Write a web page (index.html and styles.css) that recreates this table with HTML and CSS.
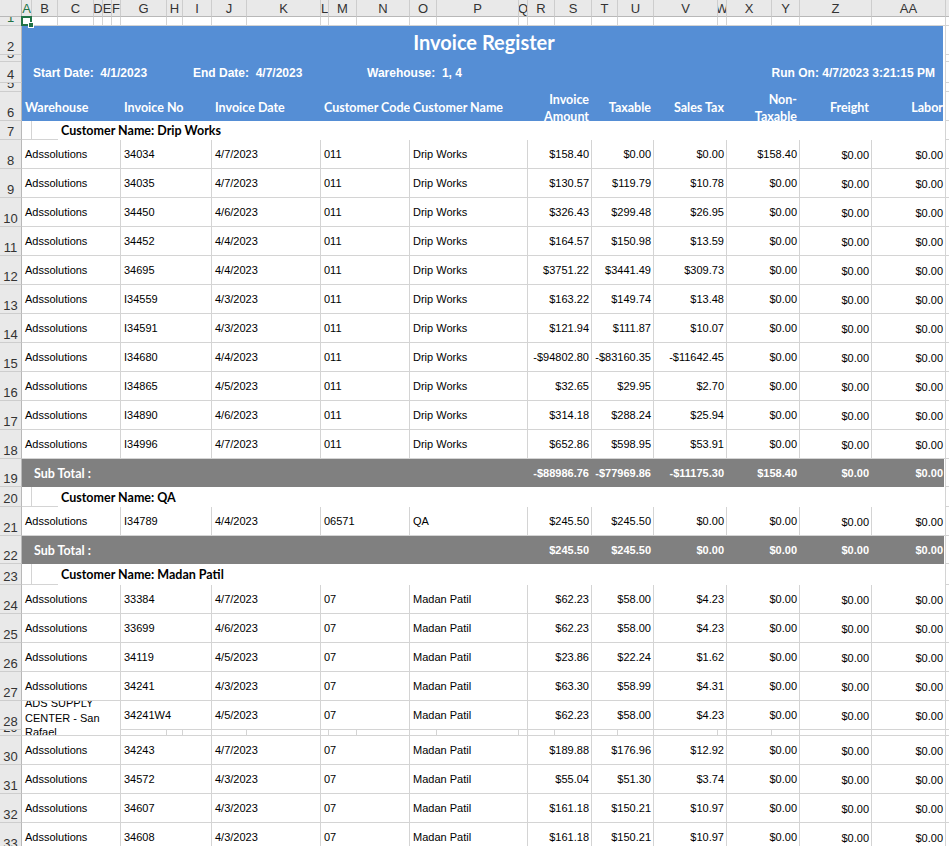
FILE: index.html
```html
<!DOCTYPE html>
<html lang="en">
<head>
<meta charset="utf-8">
<title>Invoice Register</title>
<link rel="stylesheet" href="styles.css">
</head>
<body>
<div class="sheet">
  <!-- column headers -->
  <div class="corner"></div>
  <div class="cl sel-col">A</div><div class="cl">B</div><div class="cl">C</div><div class="cl">D</div><div class="cl">E</div><div class="cl">F</div><div class="cl">G</div><div class="cl">H</div><div class="cl">I</div><div class="cl">J</div><div class="cl">K</div><div class="cl">L</div><div class="cl">M</div><div class="cl">N</div><div class="cl">O</div><div class="cl">P</div><div class="cl">Q</div><div class="cl">R</div><div class="cl">S</div><div class="cl">T</div><div class="cl">U</div><div class="cl">V</div><div class="cl">W</div><div class="cl">X</div><div class="cl">Y</div><div class="cl">Z</div><div class="cl">AA</div><div class="cl last"></div>

  <!-- row 1 -->
  <div class="rn sel-row">1</div>
  <div class="g sel"></div><div class="g"></div><div class="g"></div><div class="g"></div><div class="g"></div><div class="g"></div><div class="g"></div><div class="g"></div><div class="g"></div><div class="g"></div><div class="g"></div><div class="g"></div><div class="g"></div><div class="g"></div><div class="g"></div><div class="g"></div><div class="g"></div><div class="g"></div><div class="g"></div><div class="g"></div><div class="g"></div><div class="g"></div><div class="g"></div><div class="g"></div><div class="g"></div><div class="g"></div><div class="g"></div><div class="ab"></div>

  <!-- row 2 -->
  <div class="rn">2</div><div class="bl sp27 title endb">Invoice Register</div><div class="ab"></div>
  <!-- row 3 -->
  <div class="rn">3</div><div class="bl sp27 endb"></div><div class="ab"></div>
  <!-- row 4 -->
  <div class="rn">4</div>
  <div class="bl info sp8 pl11">Start Date:&nbsp; 4/1/2023</div>
  <div class="bl info sp5 pl10">End Date:&nbsp; 4/7/2023</div>
  <div class="bl info sp6 pl10">Warehouse:&nbsp; 1, 4</div>
  <div class="bl info sp8 runon endb">Run On: 4/7/2023 3:21:15 PM</div>
  <div class="ab"></div>
  <!-- row 5 -->
  <div class="rn">5</div><div class="bl sp27 endb"></div><div class="ab"></div>
  <!-- row 6 -->
  <div class="rn">6</div>
  <div class="bl hd w">Warehouse</div>
  <div class="bl hd inv">Invoice No</div>
  <div class="bl hd dt">Invoice Date</div>
  <div class="bl hd cc">Customer Code</div>
  <div class="bl hd cn">Customer Name</div>
  <div class="bl hd amt"><span class="two">Invoice<br>Amount</span></div>
  <div class="bl hd tx">Taxable</div>
  <div class="bl hd st">Sales Tax</div>
  <div class="bl hd nt"><span class="two">Non-<br>Taxable</span></div>
  <div class="bl hd fr">Freight</div>
  <div class="bl hd lb endb">Labor</div>
  <div class="ab"></div>

  <!-- row 7 -->
  <div class="rn">7</div><div class="cna"></div><div class="cnb"></div><div class="cnt">Customer Name: Drip Works</div><div class="ab"></div>

  <div class="rn">8</div><div class="d w">Adssolutions</div><div class="d inv">34034</div><div class="d dt">4/7/2023</div><div class="d cc">011</div><div class="d cn">Drip Works</div><div class="d amt">$158.40</div><div class="d tx">$0.00</div><div class="d st">$0.00</div><div class="d nt">$158.40</div><div class="d fr">$0.00</div><div class="d lb">$0.00</div><div class="ab"></div>
  <div class="rn">9</div><div class="d w">Adssolutions</div><div class="d inv">34035</div><div class="d dt">4/7/2023</div><div class="d cc">011</div><div class="d cn">Drip Works</div><div class="d amt">$130.57</div><div class="d tx">$119.79</div><div class="d st">$10.78</div><div class="d nt">$0.00</div><div class="d fr">$0.00</div><div class="d lb">$0.00</div><div class="ab"></div>
  <div class="rn">10</div><div class="d w">Adssolutions</div><div class="d inv">34450</div><div class="d dt">4/6/2023</div><div class="d cc">011</div><div class="d cn">Drip Works</div><div class="d amt">$326.43</div><div class="d tx">$299.48</div><div class="d st">$26.95</div><div class="d nt">$0.00</div><div class="d fr">$0.00</div><div class="d lb">$0.00</div><div class="ab"></div>
  <div class="rn">11</div><div class="d w">Adssolutions</div><div class="d inv">34452</div><div class="d dt">4/4/2023</div><div class="d cc">011</div><div class="d cn">Drip Works</div><div class="d amt">$164.57</div><div class="d tx">$150.98</div><div class="d st">$13.59</div><div class="d nt">$0.00</div><div class="d fr">$0.00</div><div class="d lb">$0.00</div><div class="ab"></div>
  <div class="rn">12</div><div class="d w">Adssolutions</div><div class="d inv">34695</div><div class="d dt">4/4/2023</div><div class="d cc">011</div><div class="d cn">Drip Works</div><div class="d amt">$3751.22</div><div class="d tx">$3441.49</div><div class="d st">$309.73</div><div class="d nt">$0.00</div><div class="d fr">$0.00</div><div class="d lb">$0.00</div><div class="ab"></div>
  <div class="rn">13</div><div class="d w">Adssolutions</div><div class="d inv">I34559</div><div class="d dt">4/3/2023</div><div class="d cc">011</div><div class="d cn">Drip Works</div><div class="d amt">$163.22</div><div class="d tx">$149.74</div><div class="d st">$13.48</div><div class="d nt">$0.00</div><div class="d fr">$0.00</div><div class="d lb">$0.00</div><div class="ab"></div>
  <div class="rn">14</div><div class="d w">Adssolutions</div><div class="d inv">I34591</div><div class="d dt">4/3/2023</div><div class="d cc">011</div><div class="d cn">Drip Works</div><div class="d amt">$121.94</div><div class="d tx">$111.87</div><div class="d st">$10.07</div><div class="d nt">$0.00</div><div class="d fr">$0.00</div><div class="d lb">$0.00</div><div class="ab"></div>
  <div class="rn">15</div><div class="d w">Adssolutions</div><div class="d inv">I34680</div><div class="d dt">4/4/2023</div><div class="d cc">011</div><div class="d cn">Drip Works</div><div class="d amt">-$94802.80</div><div class="d tx">-$83160.35</div><div class="d st">-$11642.45</div><div class="d nt">$0.00</div><div class="d fr">$0.00</div><div class="d lb">$0.00</div><div class="ab"></div>
  <div class="rn">16</div><div class="d w">Adssolutions</div><div class="d inv">I34865</div><div class="d dt">4/5/2023</div><div class="d cc">011</div><div class="d cn">Drip Works</div><div class="d amt">$32.65</div><div class="d tx">$29.95</div><div class="d st">$2.70</div><div class="d nt">$0.00</div><div class="d fr">$0.00</div><div class="d lb">$0.00</div><div class="ab"></div>
  <div class="rn">17</div><div class="d w">Adssolutions</div><div class="d inv">I34890</div><div class="d dt">4/6/2023</div><div class="d cc">011</div><div class="d cn">Drip Works</div><div class="d amt">$314.18</div><div class="d tx">$288.24</div><div class="d st">$25.94</div><div class="d nt">$0.00</div><div class="d fr">$0.00</div><div class="d lb">$0.00</div><div class="ab"></div>
  <div class="rn">18</div><div class="d w">Adssolutions</div><div class="d inv">I34996</div><div class="d dt">4/7/2023</div><div class="d cc">011</div><div class="d cn">Drip Works</div><div class="d amt">$652.86</div><div class="d tx">$598.95</div><div class="d st">$53.91</div><div class="d nt">$0.00</div><div class="d fr">$0.00</div><div class="d lb">$0.00</div><div class="ab"></div>

  <!-- row 19 subtotal -->
  <div class="rn">19</div><div class="sub sp17">Sub Total :</div><div class="sv amt">-$88986.76</div><div class="sv tx">-$77969.86</div><div class="sv st">-$11175.30</div><div class="sv nt">$158.40</div><div class="sv fr">$0.00</div><div class="sv lb endg">$0.00</div><div class="ab"></div>

  <div class="rn">20</div><div class="cna"></div><div class="cnb"></div><div class="cnt">Customer Name: QA</div><div class="ab"></div>
  <div class="rn">21</div><div class="d w">Adssolutions</div><div class="d inv">I34789</div><div class="d dt">4/4/2023</div><div class="d cc">06571</div><div class="d cn">QA</div><div class="d amt">$245.50</div><div class="d tx">$245.50</div><div class="d st">$0.00</div><div class="d nt">$0.00</div><div class="d fr">$0.00</div><div class="d lb">$0.00</div><div class="ab"></div>
  <div class="rn">22</div><div class="sub sp17">Sub Total :</div><div class="sv amt">$245.50</div><div class="sv tx">$245.50</div><div class="sv st">$0.00</div><div class="sv nt">$0.00</div><div class="sv fr">$0.00</div><div class="sv lb endg">$0.00</div><div class="ab"></div>

  <div class="rn">23</div><div class="cna"></div><div class="cnb"></div><div class="cnt">Customer Name: Madan Patil</div><div class="ab"></div>
  <div class="rn">24</div><div class="d w">Adssolutions</div><div class="d inv">33384</div><div class="d dt">4/7/2023</div><div class="d cc">07</div><div class="d cn">Madan Patil</div><div class="d amt">$62.23</div><div class="d tx">$58.00</div><div class="d st">$4.23</div><div class="d nt">$0.00</div><div class="d fr">$0.00</div><div class="d lb">$0.00</div><div class="ab"></div>
  <div class="rn">25</div><div class="d w">Adssolutions</div><div class="d inv">33699</div><div class="d dt">4/6/2023</div><div class="d cc">07</div><div class="d cn">Madan Patil</div><div class="d amt">$62.23</div><div class="d tx">$58.00</div><div class="d st">$4.23</div><div class="d nt">$0.00</div><div class="d fr">$0.00</div><div class="d lb">$0.00</div><div class="ab"></div>
  <div class="rn">26</div><div class="d w">Adssolutions</div><div class="d inv">34119</div><div class="d dt">4/5/2023</div><div class="d cc">07</div><div class="d cn">Madan Patil</div><div class="d amt">$23.86</div><div class="d tx">$22.24</div><div class="d st">$1.62</div><div class="d nt">$0.00</div><div class="d fr">$0.00</div><div class="d lb">$0.00</div><div class="ab"></div>
  <div class="rn">27</div><div class="d w">Adssolutions</div><div class="d inv">34241</div><div class="d dt">4/3/2023</div><div class="d cc">07</div><div class="d cn">Madan Patil</div><div class="d amt">$63.30</div><div class="d tx">$58.99</div><div class="d st">$4.31</div><div class="d nt">$0.00</div><div class="d fr">$0.00</div><div class="d lb">$0.00</div><div class="ab"></div>
  <div class="rn">28</div><div class="d w wrap">ADS SUPPLY CENTER - San Rafael</div><div class="d inv">34241W4</div><div class="d dt">4/5/2023</div><div class="d cc">07</div><div class="d cn">Madan Patil</div><div class="d amt">$62.23</div><div class="d tx">$58.00</div><div class="d st">$4.23</div><div class="d nt">$0.00</div><div class="d fr">$0.00</div><div class="d lb">$0.00</div><div class="ab"></div>
  <!-- row 29 (thin) -->
  <div class="rn">29</div><div class="g"></div><div class="g"></div><div class="g"></div><div class="g"></div><div class="g"></div><div class="g"></div><div class="g"></div><div class="g"></div><div class="g"></div><div class="g"></div><div class="g"></div><div class="g"></div><div class="g"></div><div class="g"></div><div class="g"></div><div class="g"></div><div class="g"></div><div class="g"></div><div class="g"></div><div class="g"></div><div class="g"></div><div class="ab"></div>
  <div class="rn">30</div><div class="d w">Adssolutions</div><div class="d inv">34243</div><div class="d dt">4/7/2023</div><div class="d cc">07</div><div class="d cn">Madan Patil</div><div class="d amt">$189.88</div><div class="d tx">$176.96</div><div class="d st">$12.92</div><div class="d nt">$0.00</div><div class="d fr">$0.00</div><div class="d lb">$0.00</div><div class="ab"></div>
  <div class="rn">31</div><div class="d w">Adssolutions</div><div class="d inv">34572</div><div class="d dt">4/3/2023</div><div class="d cc">07</div><div class="d cn">Madan Patil</div><div class="d amt">$55.04</div><div class="d tx">$51.30</div><div class="d st">$3.74</div><div class="d nt">$0.00</div><div class="d fr">$0.00</div><div class="d lb">$0.00</div><div class="ab"></div>
  <div class="rn">32</div><div class="d w">Adssolutions</div><div class="d inv">34607</div><div class="d dt">4/3/2023</div><div class="d cc">07</div><div class="d cn">Madan Patil</div><div class="d amt">$161.18</div><div class="d tx">$150.21</div><div class="d st">$10.97</div><div class="d nt">$0.00</div><div class="d fr">$0.00</div><div class="d lb">$0.00</div><div class="ab"></div>
  <div class="rn">33</div><div class="d w">Adssolutions</div><div class="d inv">34608</div><div class="d dt">4/3/2023</div><div class="d cc">07</div><div class="d cn">Madan Patil</div><div class="d amt">$161.18</div><div class="d tx">$150.21</div><div class="d st">$10.97</div><div class="d nt">$0.00</div><div class="d fr">$0.00</div><div class="d lb">$0.00</div><div class="ab"></div>
</div>
</body>
</html>
```

FILE: styles.css
```css
html, body {
  margin: 0;
  padding: 0;
  background: #fff;
  overflow: hidden;
}
body {
  width: 949px;
  height: 846px;
}

.sheet {
  display: grid;
  width: 949px;
  grid-template-columns:
    22px 10px 26px 36px 9px 9px 9px 46px 16px 29px 35px 74px 8px 28px
    53px 27px 82px 9px 27px 37px 26px 36px 64px 9px 45px 28px 72px 74px 1fr;
  grid-template-rows:
    17px 9px 29px 7px 21px 9px 29px 19px
    repeat(11, 29px) 28px 20px 29px 28px 21px
    repeat(5, 29px) 6px repeat(4, 29px);
  font-family: "Liberation Sans", Arial, sans-serif;
  font-size: 11px;
  color: #000;
}

.sheet > div {
  box-sizing: border-box;
  display: flex;
  align-items: center;
  overflow: hidden;
  white-space: nowrap;
  min-width: 0;
}

/* headers */
.sheet .corner {
  background: #e9e9e9;
  border-right: 1px solid #b8b8b8;
  border-bottom: 1px solid #b8b8b8;
}
.sheet .cl {
  background: #e9e9e9;
  border-right: 1px solid #cdcdcd;
  border-bottom: 1px solid #b8b8b8;
  justify-content: center;
  font-size: 13px;
  color: #333;
  line-height: 15px;
}
.sheet .cl.last {
  border-right: 0;
}
.sheet .sel-col {
  color: #217346;
}
.sheet .rn {
  background: #e9e9e9;
  border-right: 1px solid #b8b8b8;
  border-bottom: 1px solid #cdcdcd;
  justify-content: center;
  align-items: flex-end;
  font-size: 13px;
  line-height: 15px;
  color: #333;
}
.sheet .sel-row {
  color: #217346;
}

/* plain grid cell */
.sheet .g {
  border-right: 1px solid #d4d4d4;
  border-bottom: 1px solid #d4d4d4;
}
.sheet .ab {
  border-bottom: 1px solid #d4d4d4;
}

/* selection box at A1 */
.sheet .sel {
  position: relative;
  overflow: visible;
  z-index: 2;
}
.sheet .sel::before {
  content: "";
  position: absolute;
  left: -1px;
  top: -1px;
  right: -1px;
  bottom: -1px;
  border: 2px solid #217346;
}
.sheet .sel::after {
  content: "";
  position: absolute;
  right: -3px;
  bottom: -3px;
  width: 4px;
  height: 4px;
  background: #217346;
  border: 1px solid #fff;
}

/* spans */
.sp5 { grid-column: span 5; }
.sp6 { grid-column: span 6; }
.sp8 { grid-column: span 8; }
.sp17 { grid-column: span 17; }
.sp27 { grid-column: span 27; }
.w { grid-column: span 6; }
.inv { grid-column: span 3; }
.dt { grid-column: span 2; }
.cc { grid-column: span 3; }
.cn { grid-column: span 3; }
.amt { grid-column: span 2; }
.tx { grid-column: span 2; }
.st { grid-column: span 2; }
.nt { grid-column: span 2; }
.fr { grid-column: span 1; }
.lb { grid-column: span 1; }

/* blue report header */
.sheet .bl {
  background: #558ed5;
  color: #fff;
}
.sheet .endb {
  box-shadow: inset -1px 0 #d4d4d4, inset -3px 0 #fff;
}
.sheet .title {
  justify-content: center;
  font-family: Lato, "Liberation Sans", sans-serif;
  font-weight: 700;
  font-size: 20px;
  padding-top: 2px;
}
.sheet .info {
  font-weight: 700;
  font-size: 12px;
}
.sheet .pl11 { padding-left: 11px; }
.sheet .pl10 { padding-left: 10px; }
.sheet .runon {
  justify-content: flex-end;
  padding-right: 11px;
}
.sheet .hd {
  font-family: Lato, "Liberation Sans", sans-serif;
  font-weight: 700;
  font-size: 12.5px;
  line-height: 17px;
  padding-left: 3px;
  padding-top: 2px;
}
.sheet .hd.amt, .sheet .hd.tx, .sheet .hd.st, .sheet .hd.nt, .sheet .hd.fr {
  justify-content: flex-end;
  padding-left: 0;
  padding-right: 3px;
}
.sheet .hd.lb {
  justify-content: flex-end;
  padding-left: 0;
  padding-right: 3px;
}
.two {
  display: block;
  text-align: right;
}

/* customer name rows */
.sheet .cna {
  border-right: 1px solid #d4d4d4;
  border-bottom: 1px solid #d4d4d4;
}
.sheet .cnb {
  border-bottom: 1px solid #d4d4d4;
}
.sheet .cnt {
  grid-column: span 25;
  border-right: 1px solid #d4d4d4;
  padding-left: 3px;
  font-family: Lato, "Liberation Sans", sans-serif;
  font-weight: 700;
  font-size: 12.5px;
}

/* data cells */
.sheet .d {
  border-right: 1px solid #d4d4d4;
  border-bottom: 1px solid #d4d4d4;
  padding-left: 3px;
}
.sheet .d.amt, .sheet .d.tx, .sheet .d.st, .sheet .d.nt, .sheet .d.fr, .sheet .d.lb {
  justify-content: flex-end;
  padding-left: 0;
  padding-right: 2px;
}
.sheet .d.fr, .sheet .d.lb {
  padding-top: 2px;
}
.sheet .d.wrap {
  grid-row: span 2;
  white-space: normal;
  line-height: 14.5px;
}

/* subtotal rows */
.sheet .sub {
  background: #808080;
  color: #fff;
  padding-left: 12px;
  font-family: Lato, "Liberation Sans", sans-serif;
  font-weight: 700;
  font-size: 12.5px;
}
.sheet .sv {
  background: #808080;
  color: #fff;
  font-weight: 700;
  justify-content: flex-end;
  padding-right: 3px;
}
.sheet .sv.lb {
  padding-right: 3px;
}
.sheet .endg {
  box-shadow: inset -1px 0 #d4d4d4, inset -2px 0 #fff;
}
```
